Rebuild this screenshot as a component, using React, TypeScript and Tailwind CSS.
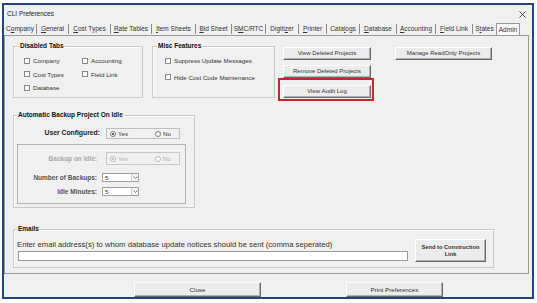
import React from 'react';

const F = { fontFamily: '"Liberation Sans", Arial, sans-serif' };

const tabs: [string, string, string, string][] = [
  ['C', 'o', 'mpany', 'w-[33px]'],
  ['', 'G', 'eneral', 'w-[32px]'],
  ['', 'C', 'ost Types', 'w-[42px]'],
  ['', 'R', 'ate Tables', 'w-[41px]'],
  ['', 'I', 'tem Sheets', 'w-[44px]'],
  ['', 'B', 'id Sheet', 'w-[36px]'],
  ['S', 'M', 'C/RTC', 'w-[34px]'],
  ['Digiti', 'z', 'er', 'w-[33px]'],
  ['', 'P', 'rinter', 'w-[28px]'],
  ['Cata', 'l', 'ogs', 'w-[33px]'],
  ['', 'D', 'atabase', 'w-[37px]'],
  ['', 'A', 'ccounting', 'w-[39px]'],
  ['', 'F', 'ield Link', 'w-[37px]'],
  ['S', 't', 'ates', 'w-[23px]'],
];

function Check({ label }: { label: string }) {
  return (
    <div className="flex items-center">
      <span className="block w-[6px] h-[6px] border border-[#8a8a8a] bg-white" />
      <span className="ml-[3px] text-[6.2px] text-[#333]">{label}</span>
    </div>
  );
}

function Btn({ children, className }: { children: React.ReactNode; className: string }) {
  return (
    <div
      className={`flex items-center justify-center bg-[#ececec] border border-t-white border-l-white border-r-[#6a6a6a] border-b-[#6a6a6a] shadow-[inset_-1px_-1px_0_#b0b0b0] text-[#333] ${className}`}
    >
      {children}
    </div>
  );
}

function Radio({ on, gray, className }: { on?: boolean; gray?: boolean; className?: string }) {
  return (
    <span
      className={`relative block shrink-0 w-[6px] h-[6px] rounded-full border bg-white ${gray ? 'border-[#b8b8b8]' : 'border-[#7a7a7a]'} ${className ?? ''}`}
    >
      {on && (
        <span className={`absolute left-[1px] top-[1px] w-[2px] h-[2px] rounded-full ${gray ? 'bg-[#aaa]' : 'bg-[#333]'}`} />
      )}
    </span>
  );
}

function Select() {
  return (
    <div className="flex w-[37px] h-[9px] bg-white border border-[#a0a0a0]">
      <span className="flex-1 pl-[2px] text-[6.2px] leading-[7px] text-[#333]">5</span>
      <span className="w-[7px] border-l border-[#d0d0d0] bg-[#f4f4f4] flex items-center justify-center">
        <svg width="5" height="3" viewBox="0 0 5 3">
          <path d="M0.5 0.5 L2.5 2.5 L4.5 0.5" stroke="#555" strokeWidth="0.8" fill="none" />
        </svg>
      </span>
    </div>
  );
}

function Title({ children, className }: { children: React.ReactNode; className: string }) {
  return (
    <div className={`absolute top-[-5px] bg-[#f0f0f0] px-[1px] text-[6.5px] leading-[8px] font-bold text-[#111] ${className}`}>
      {children}
    </div>
  );
}

export default function App() {
  return (
    <div className="w-[537px] h-[303px] bg-white pt-[3px] pl-[2px] overflow-hidden" style={F}>
      <div className="w-[532px] h-[296px] border-2 border-[#24437f] bg-[#f0f0f0] flex flex-col">
        {/* title bar */}
        <div className="h-[18px] flex items-center justify-between pl-[3px] pr-[6px]">
          <span className="text-[6.5px] text-[#222]">CLI Preferences</span>
          <svg width="7" height="7" viewBox="0 0 7 7">
            <path d="M0.5 0.5 L6.5 6.5 M6.5 0.5 L0.5 6.5" stroke="#333" strokeWidth="0.9" />
          </svg>
        </div>
        {/* tabs */}
        <div className="h-[12px] flex items-end">
          {tabs.map(([a, u, b, w], i) => (
            <div key={i} className={`${w} h-[12px] flex items-center justify-center`}>
              <span className="flex-1 text-center text-[6.5px] leading-[8px] text-[#333] whitespace-nowrap">
                {a}
                <u>{u}</u>
                {b}
              </span>
              {i < tabs.length - 1 && <span className="w-px h-[10px] bg-[#8c8c8c]" />}
            </div>
          ))}
          <div className="w-[24px] h-[13px] mb-[-1px] border border-b-0 border-[#9a9a9a] bg-[#f8f8f8] flex items-center justify-center text-[6.5px] text-[#333]">
            Admin
          </div>
        </div>
        {/* panel */}
        <div className="w-[525px] h-[239px] border border-[#9a9a9a] pt-[10px] pl-[8px] flex flex-col">
          {/* row 1 */}
          <div className="flex items-start">
            <div className="relative w-[130px] h-[52px] border border-[#c8c8c8] shadow-[inset_1px_1px_0_#fff] pl-[10px] pt-[7px]">
              <Title className="left-[5px]">Disabled Tabs</Title>
              <div className="grid grid-cols-[58px_auto] auto-rows-[13.5px] items-center">
                <Check label="Company" />
                <Check label="Accounting" />
                <Check label="Cost Types" />
                <Check label="Field Link" />
                <Check label="Database" />
              </div>
            </div>
            <div className="relative ml-[9px] w-[123px] h-[52px] border border-[#c8c8c8] shadow-[inset_1px_1px_0_#fff] pl-[12px] pt-[9px]">
              <Title className="left-[4px]">Misc Features</Title>
              <div className="flex flex-col gap-[7.5px]">
                <Check label="Suppress Update Messages" />
                <Check label="Hide Cost Code Maintenance" />
              </div>
            </div>
            <div className="ml-[3px] flex flex-col mt-[1px]">
              <Btn className="ml-[5px] w-[88px] h-[13px] text-[6px]">View Deleted Projects</Btn>
              <Btn className="ml-[5px] mt-[5px] w-[88px] h-[13px] text-[6px]">Remove Deleted Projects</Btn>
              <div className="w-[96px] h-[23px] border-2 border-[#c0282d] pt-[5px] pl-[3px]">
                <Btn className="w-[88px] h-[13px] text-[6px]">View Audit Log</Btn>
              </div>
            </div>
            <Btn className="ml-[21px] mt-[1px] w-[97px] h-[13px] text-[6px]">Manage ReadOnly Projects</Btn>
          </div>
          {/* row 2 */}
          <div className="relative mt-[14px] w-[182px] h-[93px] border border-[#c8c8c8] shadow-[inset_1px_1px_0_#fff] pt-[12px]">
            <Title className="left-[3px]">Automatic Backup Project On Idle</Title>
            <div className="flex items-center h-[11px]">
              <span className="w-[86px] text-right text-[6.8px] font-bold text-[#222]">User Configured:</span>
              <div className="ml-[6px] w-[74px] h-[11px] border border-[#c0c0c0] flex items-center pl-[3px]">
                <Radio on />
                <span className="ml-[2px] text-[6.2px] text-[#333]">Yes</span>
                <Radio className="ml-[27px]" />
                <span className="ml-[2px] text-[6.2px] text-[#333]">No</span>
              </div>
            </div>
            <div className="ml-[3px] mt-[5px] w-[169px] h-[60px] border border-[#b4b4b4] pt-[7px]">
              <div className="flex items-center h-[13px]">
                <span className="w-[79px] text-right text-[6.5px] font-bold text-[#a8a8a8]">Backup on Idle:</span>
                <div className="ml-[9px] w-[74px] h-[13px] border border-[#c8c8c8] flex items-center pl-[3px]">
                  <Radio on gray />
                  <span className="ml-[2px] text-[6.2px] text-[#b0b0b0]">Yes</span>
                  <Radio gray className="ml-[27px]" />
                  <span className="ml-[2px] text-[6.2px] text-[#b0b0b0]">No</span>
                </div>
              </div>
              <div className="flex items-center h-[9px] mt-[8px]">
                <span className="w-[79px] text-right text-[6.5px] font-bold text-[#555]">Number of Backups:</span>
                <span className="ml-[5px]"><Select /></span>
              </div>
              <div className="flex items-center h-[9px] mt-[5px]">
                <span className="w-[79px] text-right text-[6.5px] font-bold text-[#555]">Idle Minutes:</span>
                <span className="ml-[5px]"><Select /></span>
              </div>
            </div>
          </div>
          {/* row 3 */}
          <div className="relative mt-[21px] w-[481px] h-[39px] border border-[#c8c8c8] shadow-[inset_1px_1px_0_#fff] flex items-start pl-[3px]">
            <Title className="left-[3px]">Emails</Title>
            <div className="flex flex-col w-[391px]">
              <span className="mt-[10px] text-[7.7px] leading-[9px] text-[#333] whitespace-nowrap">
                Enter email address(s) to whom database update notices should be sent (comma seperated)
              </span>
              <div className="ml-[1px] mt-[2px] w-[390px] h-[10px] bg-white border border-[#9a9a9a]" />
            </div>
            <Btn className="ml-[7px] mt-[9px] w-[71px] h-[23px] flex-col text-[5.7px] leading-[6.5px] font-bold">
              <span>Send to Construction</span>
              <span>Link</span>
            </Btn>
          </div>
        </div>
        {/* bottom buttons */}
        <div className="flex mt-[8px]">
          <Btn className="ml-[130px] w-[127px] h-[15px] text-[6.2px]">Close</Btn>
          <Btn className="ml-[85px] w-[97px] h-[15px] text-[6.2px]">Print Preferences</Btn>
        </div>
      </div>
    </div>
  );
}
